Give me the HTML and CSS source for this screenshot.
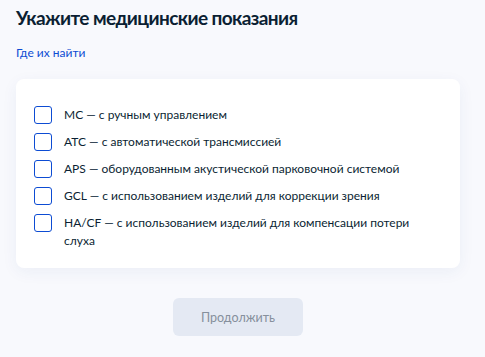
FILE: index.html
```html
<!DOCTYPE html>
<html lang="ru">
<head>
    <meta charset="UTF-8">
    <meta name="viewport" content="width=device-width, initial-scale=1.0">
    <title>Медицинские показания</title>
    <link rel="stylesheet" href="styles.css">
</head>
<body>

    <h1 class="title">Укажите медицинские показания</h1>
    <a class="link" href="#">Где их найти</a>

    <div class="card">
        <label class="option"><span class="box"></span><span class="text">MC — с ручным управлением</span></label>
        <label class="option"><span class="box"></span><span class="text">ATC — с автоматической трансмиссией</span></label>
        <label class="option"><span class="box"></span><span class="text">APS — оборудованным акустической парковочной системой</span></label>
        <label class="option"><span class="box"></span><span class="text">GCL — с использованием изделий для коррекции зрения</span></label>
        <label class="option"><span class="box"></span><span class="text">HA/CF — с использованием изделий для компенсации потери слуха</span></label>
    </div>

    <div class="actions">
        <button class="btn" disabled>Продолжить</button>
    </div>

</body>
</html>
```

FILE: styles.css
```css
body, html {
    margin: 0;
    padding: 0;
    background-color: #f8f9fd;
    color: #0b1f33;
    font-family: Lato, "Noto Sans", sans-serif;
}

body {
    padding: 0 25px 0 16px;
}

.title {
    margin: 0;
    padding-top: 6px;
    font-size: 19px;
    line-height: 24px;
    font-weight: 700;
    letter-spacing: -0.6px;
}

.link {
    display: inline-block;
    margin-top: 15px;
    font-size: 12px;
    line-height: 16px;
    color: #0d4cd3;
    text-decoration: none;
}

.card {
    margin-top: 18px;
    background: #fff;
    border-radius: 8px;
    padding: 27px 18px 18px 18px;
    display: flex;
    flex-direction: column;
    gap: 9px;
    box-shadow: 0 4px 16px rgba(30, 60, 140, 0.06);
}

.option {
    display: flex;
    align-items: flex-start;
    gap: 12px;
    font-size: 12px;
    line-height: 18px;
    cursor: pointer;
}

.box {
    flex: none;
    width: 18px;
    height: 18px;
    box-sizing: border-box;
    border: 1.5px solid #0d4cd3;
    border-radius: 3px;
}

.actions {
    display: flex;
    justify-content: center;
    margin-top: 30px;
}

.btn {
    width: 130px;
    height: 38px;
    border: none;
    border-radius: 6px;
    background: #e4e9f3;
    color: #86909c;
    font-family: inherit;
    font-size: 12.5px;
}
```
